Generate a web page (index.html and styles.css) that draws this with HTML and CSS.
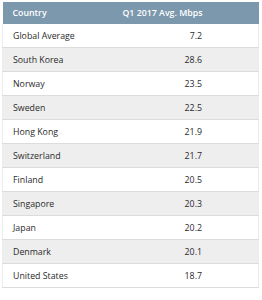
FILE: index.html
```html
<!DOCTYPE html>
<html>
<head>
<meta charset="utf-8">
<link rel="stylesheet" href="styles.css">
</head>
<body>
<div class="wrap">
<table class="speeds">
<thead>
<tr><th class="c">Country</th><th class="n">Q1 2017 Avg. Mbps</th></tr>
</thead>
<tbody>
<tr><td class="c">Global Average</td><td class="n">7.2</td></tr>
<tr><td class="c">South Korea</td><td class="n">28.6</td></tr>
<tr><td class="c">Norway</td><td class="n">23.5</td></tr>
<tr><td class="c">Sweden</td><td class="n">22.5</td></tr>
<tr><td class="c">Hong Kong</td><td class="n">21.9</td></tr>
<tr><td class="c">Switzerland</td><td class="n">21.7</td></tr>
<tr><td class="c">Finland</td><td class="n">20.5</td></tr>
<tr><td class="c">Singapore</td><td class="n">20.3</td></tr>
<tr><td class="c">Japan</td><td class="n">20.2</td></tr>
<tr><td class="c">Denmark</td><td class="n">20.1</td></tr>
<tr><td class="c">United States</td><td class="n">18.7</td></tr>
</tbody>
</table>
</div>
</body>
</html>
```
FILE: styles.css
```css
html, body {
  margin: 0;
  padding: 0;
  background: #ffffff;
}
.wrap {
  padding: 2px 0 0 2px;
}
.speeds {
  width: 257px;
  border-collapse: collapse;
  font-family: "Open Sans", "Liberation Sans", sans-serif;
  font-size: 8.8px;
  color: #2a2a2a;
}
.speeds th {
  background: #7b98ad;
  color: #ffffff;
  font-weight: 600;
  height: 22px;
  padding: 0;
  border: none;
}
.speeds td {
  height: 23px;
  padding: 0;
  border-bottom: 1px solid #dcdcdc;
}
.speeds tbody tr td:first-child { border-left: 1px solid #ececec; }
.speeds tbody tr td:last-child { border-right: 1px solid #ececec; }
.speeds tbody tr:nth-child(even) td {
  background: #eeeeee;
}
.speeds .c {
  text-align: left;
  padding-left: 10px;
}
.speeds .n {
  text-align: right;
  padding-right: 56px;
}
```
